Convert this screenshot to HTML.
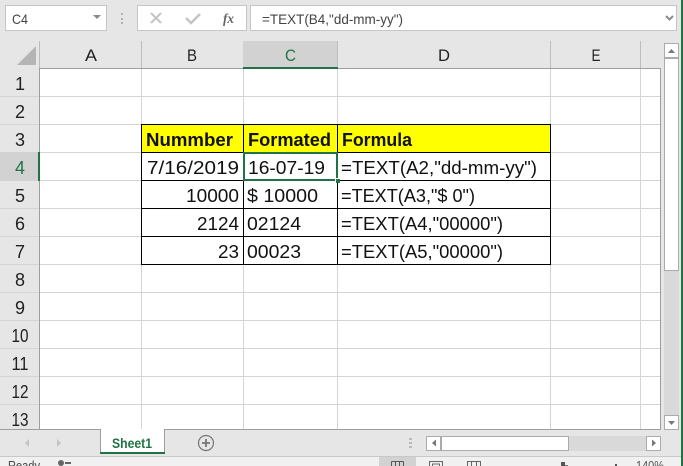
<!DOCTYPE html>
<html><head><meta charset="utf-8"><style>
html,body{margin:0;padding:0;width:683px;height:466px;overflow:hidden;background:#e6e6e6}
svg{display:block;position:absolute;left:0;top:0}
text{font-family:"Liberation Sans",sans-serif}
.c{font-size:18px;fill:#111}
.b{font-size:18px;font-weight:bold;fill:#111}
.h{font-size:17px;fill:#222;text-anchor:middle}
</style></head><body>
<svg width="683" height="466" viewBox="0 0 683 466" shape-rendering="crispEdges">
<rect width="683" height="466" fill="#e6e6e6"/>
<!-- name box -->
<rect x="5.500" y="5.500" width="101" height="25" fill="#fff" stroke="#c6c6c6"/>
<text x="12" y="24" font-size="14" fill="#444" textLength="16" lengthAdjust="spacingAndGlyphs">C4</text>
<path d="M93 15h8l-4 4z" fill="#8a8a8a" shape-rendering="auto"/>
<rect x="121" y="13" width="2" height="2" fill="#b0b0b0"/><rect x="121" y="18" width="2" height="2" fill="#b0b0b0"/><rect x="121" y="22" width="2" height="2" fill="#b0b0b0"/>
<rect x="137.500" y="5.500" width="109" height="25" fill="#fff" stroke="#c6c6c6"/>
<path d="M151 13l10 10M161 13l-10 10" stroke="#c4c4c4" stroke-width="2" fill="none" shape-rendering="auto"/>
<path d="M186 18l5 5 9-9" stroke="#c4c4c4" stroke-width="2.500" fill="none" shape-rendering="auto"/>
<text x="223" y="23" font-style="italic" font-weight="bold" font-size="14" fill="#666" style="font-family:'Liberation Serif',serif" textLength="11" lengthAdjust="spacingAndGlyphs">fx</text>
<rect x="250.500" y="5.500" width="426" height="25" fill="#fff" stroke="#c6c6c6"/>
<text x="262" y="24" font-size="14" fill="#444" textLength="141" lengthAdjust="spacingAndGlyphs">=TEXT(B4,"dd-mm-yy")</text>
<path d="M666 16l3.500 3.500 3.500-3.500" stroke="#8a8a8a" stroke-width="2" fill="none" shape-rendering="auto"/>

<!-- corner -->
<path d="M36 46v19H17z" fill="#b5b5b5" shape-rendering="auto"/>
<!-- column header -->
<rect x="243" y="41" width="94" height="26" fill="#d2d2d2"/>
<rect x="39" y="41" width="1" height="27" fill="#bdbdbd"/>
<rect x="141" y="41" width="1" height="27" fill="#bdbdbd"/>
<rect x="337" y="41" width="1" height="27" fill="#bdbdbd"/>
<rect x="550" y="41" width="1" height="27" fill="#bdbdbd"/>
<rect x="640" y="41" width="1" height="27" fill="#bdbdbd"/>
<text class="h" x="91" y="61" textLength="12" lengthAdjust="spacingAndGlyphs">A</text>
<text class="h" x="192" y="61" textLength="10" lengthAdjust="spacingAndGlyphs">B</text>
<text class="h" x="290.500" y="61" style="fill:#217346" textLength="11" lengthAdjust="spacingAndGlyphs">C</text>
<text class="h" x="444" y="61" textLength="12" lengthAdjust="spacingAndGlyphs">D</text>
<text class="h" x="596" y="61" textLength="9" lengthAdjust="spacingAndGlyphs">E</text>

<!-- sheet -->
<rect x="40" y="68" width="620" height="361" fill="#fff"/>
<rect x="243" y="67" width="95" height="2" fill="#217346"/>
<rect x="39" y="68" width="204" height="1" fill="#9e9e9e"/><rect x="338" y="68" width="322" height="1" fill="#9e9e9e"/>
<g fill="#d4d4d4">
<rect x="0" y="96" width="660" height="1"/><rect x="0" y="124" width="660" height="1"/><rect x="0" y="152" width="660" height="1"/><rect x="0" y="180" width="660" height="1"/><rect x="0" y="208" width="660" height="1"/><rect x="0" y="236" width="660" height="1"/><rect x="0" y="264" width="660" height="1"/><rect x="0" y="292" width="660" height="1"/><rect x="0" y="320" width="660" height="1"/><rect x="0" y="348" width="660" height="1"/><rect x="0" y="376" width="660" height="1"/><rect x="0" y="404" width="660" height="1"/>
<rect x="141" y="69" width="1" height="360"/><rect x="243" y="69" width="1" height="360"/><rect x="337" y="69" width="1" height="360"/><rect x="550" y="69" width="1" height="360"/><rect x="640" y="69" width="1" height="360"/>
</g>
<!-- row header -->
<rect x="0" y="152" width="39" height="29" fill="#d2d2d2"/>
<rect x="38" y="152" width="2" height="29" fill="#217346"/>
<rect x="39" y="68" width="1" height="84" fill="#9e9e9e"/><rect x="39" y="181" width="1" height="248" fill="#9e9e9e"/>
<g font-size="18" text-anchor="middle" fill="#222">
<text x="20" y="90">1</text><text x="20" y="118">2</text><text x="20" y="146">3</text><text x="20" y="174" fill="#217346">4</text><text x="20" y="202">5</text><text x="20" y="230">6</text><text x="20" y="258">7</text><text x="20" y="286">8</text><text x="20" y="314">9</text>
<text x="20" y="342" textLength="17" lengthAdjust="spacingAndGlyphs">10</text><text x="20" y="370" textLength="17" lengthAdjust="spacingAndGlyphs">11</text><text x="20" y="398" textLength="17" lengthAdjust="spacingAndGlyphs">12</text><text x="20" y="426" textLength="17" lengthAdjust="spacingAndGlyphs">13</text>
</g>
<!-- table -->
<rect x="142" y="125" width="408" height="27" fill="#ffff00"/>
<g fill="#000">
<rect x="141" y="124" width="410" height="1"/><rect x="141" y="152" width="410" height="1"/><rect x="141" y="180" width="410" height="1"/><rect x="141" y="208" width="410" height="1"/><rect x="141" y="236" width="410" height="1"/><rect x="141" y="264" width="410" height="1"/>
<rect x="141" y="124" width="1" height="141"/><rect x="243" y="124" width="1" height="141"/><rect x="337" y="124" width="1" height="141"/><rect x="550" y="124" width="1" height="141"/>
</g>
<text class="b" x="146" y="146" textLength="87" lengthAdjust="spacingAndGlyphs">Nummber</text>
<text class="b" x="248" y="146" textLength="83" lengthAdjust="spacingAndGlyphs">Formated</text>
<text class="b" x="342" y="146" textLength="70" lengthAdjust="spacingAndGlyphs">Formula</text>
<text class="c" x="147" y="174" textLength="92" lengthAdjust="spacingAndGlyphs">7/16/2019</text>
<text class="c" x="248" y="174" textLength="77" lengthAdjust="spacingAndGlyphs">16-07-19</text>
<text class="c" x="341" y="174" textLength="196" lengthAdjust="spacingAndGlyphs">=TEXT(A2,"dd-mm-yy")</text>
<text class="c" x="186" y="202" textLength="53" lengthAdjust="spacingAndGlyphs">10000</text>
<text class="c" x="247" y="202" textLength="71" lengthAdjust="spacingAndGlyphs">$ 10000</text>
<text class="c" x="341" y="202" textLength="134" lengthAdjust="spacingAndGlyphs">=TEXT(A3,"$ 0")</text>
<text class="c" x="197" y="230" textLength="42" lengthAdjust="spacingAndGlyphs">2124</text>
<text class="c" x="247" y="230" textLength="54" lengthAdjust="spacingAndGlyphs">02124</text>
<text class="c" x="341" y="230" textLength="162" lengthAdjust="spacingAndGlyphs">=TEXT(A4,"00000")</text>
<text class="c" x="218" y="258" textLength="21" lengthAdjust="spacingAndGlyphs">23</text>
<text class="c" x="247" y="258" textLength="54" lengthAdjust="spacingAndGlyphs">00023</text>
<text class="c" x="341" y="258" textLength="162" lengthAdjust="spacingAndGlyphs">=TEXT(A5,"00000")</text>
<!-- selection -->
<rect x="244" y="153" width="93" height="27" fill="none" stroke="#217346" stroke-width="2"/>
<rect x="335" y="178" width="5" height="5" fill="#fff"/>
<rect x="336" y="179" width="4" height="4" fill="#217346"/>

<!-- sheet right edge -->
<rect x="660" y="68" width="1" height="362" fill="#9e9e9e"/>
<!-- v scrollbar -->
<rect x="664" y="43" width="15" height="386" fill="#d9d9d9"/>
<rect x="664.500" y="43.500" width="14" height="14" fill="#fff" stroke="#ababab"/>
<path d="M668 53h7l-3.500-4z" fill="#777" shape-rendering="auto"/>
<rect x="664.500" y="58.500" width="14" height="212" fill="#fff" stroke="#ababab"/>
<rect x="664.500" y="415.500" width="14" height="14" fill="#fff" stroke="#ababab"/>
<path d="M668 421h7l-3.500 4z" fill="#777" shape-rendering="auto"/>
<rect x="681" y="0" width="2" height="466" fill="#217346"/>

<!-- tabs bar -->
<rect x="0" y="429" width="660" height="1" fill="#9e9e9e"/>
<path d="M29 439v8l-4-4zM57 439v8l4-4z" fill="#c4c4c4" shape-rendering="auto"/>
<rect x="100" y="429" width="65" height="24" fill="#fff"/>
<rect x="100" y="429" width="1" height="24" fill="#9e9e9e"/><rect x="164" y="429" width="1" height="24" fill="#9e9e9e"/>
<rect x="100" y="452" width="65" height="2" fill="#217346"/>
<text x="112" y="448" font-size="14" font-weight="bold" fill="#217346" textLength="40" lengthAdjust="spacingAndGlyphs">Sheet1</text>
<circle cx="206" cy="443" r="7.500" fill="none" stroke="#777" stroke-width="1.200" shape-rendering="auto"/>
<path d="M206 439v8M202 443h8" stroke="#777" stroke-width="1.800" fill="none" shape-rendering="auto"/>
<rect x="409" y="438" width="3" height="2" fill="#b8b8b8"/><rect x="409" y="442" width="3" height="2" fill="#b8b8b8"/><rect x="409" y="446" width="3" height="2" fill="#b8b8b8"/>
<!-- h scrollbar -->
<rect x="426" y="436" width="235" height="15" fill="#d9d9d9"/>
<rect x="426.500" y="436.500" width="14" height="14" fill="#fff" stroke="#ababab"/>
<path d="M436 439.500v7l-4-3.500z" fill="#777" shape-rendering="auto"/>
<rect x="441.500" y="436.500" width="127" height="14" fill="#fff" stroke="#ababab"/>
<rect x="646.500" y="436.500" width="14" height="14" fill="#fff" stroke="#ababab"/>
<path d="M652 439.500v7l4-3.500z" fill="#777" shape-rendering="auto"/>

<!-- status bar -->
<rect x="0" y="457" width="681" height="9" fill="#f1f1f1"/>
<rect x="0" y="456" width="681" height="1" fill="#c8c8c8"/>
<text x="8" y="470" font-size="13" fill="#444" textLength="32" lengthAdjust="spacingAndGlyphs">Ready</text>
<circle cx="61" cy="463" r="3" fill="#666" shape-rendering="auto"/><rect x="65" y="462" width="6" height="2" fill="#666"/>
<rect x="379" y="457" width="37" height="9" fill="#d2d2d2"/>
<path d="M391.500 461.500h12M391.500 461.500v5M395.500 461.500v5M399.500 461.500v5M403.500 461.500v5" stroke="#555" fill="none"/>
<path d="M429.500 466v-4.500h13v4.500M432.500 466v-2h7v2" stroke="#666" fill="none"/>
<path d="M467.500 466v-4.500h13v4.500M471.500 461.500v5M476.500 461.500v5" stroke="#666" fill="none"/>
<rect x="564" y="465" width="4" height="1" fill="#777"/><rect x="561" y="462" width="4" height="4" fill="#555"/>
<rect x="615" y="464" width="2" height="2" fill="#555"/>
<text x="636" y="470" font-size="13" fill="#555" textLength="28" lengthAdjust="spacingAndGlyphs">140%</text>
</svg>
</body></html>
